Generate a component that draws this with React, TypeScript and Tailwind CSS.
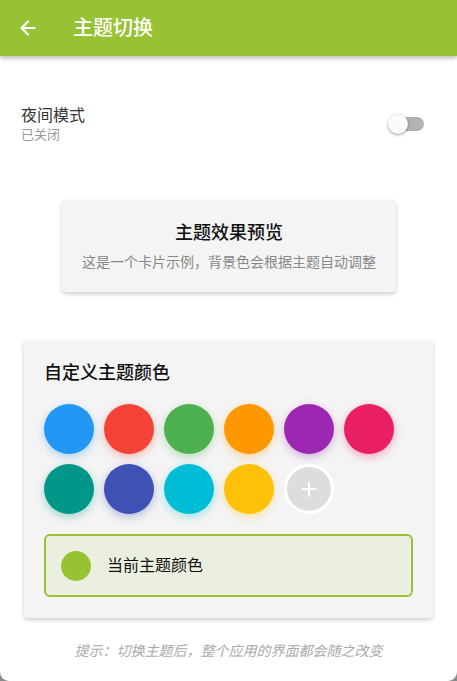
import { ArrowLeft, Plus } from 'lucide-react'

const COLORS = [
  { c: '#2196f3', glow: 'rgba(33,150,243,.35)' },
  { c: '#f44336', glow: 'rgba(244,67,54,.35)' },
  { c: '#4caf50', glow: 'rgba(76,175,80,.35)' },
  { c: '#ff9800', glow: 'rgba(255,152,0,.35)' },
  { c: '#9c27b0', glow: 'rgba(156,39,176,.35)' },
  { c: '#e91e63', glow: 'rgba(233,30,99,.35)' },
  { c: '#009688', glow: 'rgba(0,150,136,.35)' },
  { c: '#3f51b5', glow: 'rgba(63,81,181,.35)' },
  { c: '#00bcd4', glow: 'rgba(0,188,212,.35)' },
  { c: '#ffc107', glow: 'rgba(255,193,7,.35)' },
]

const FONT = '[font-family:Roboto,"Noto_Sans_CJK_SC",sans-serif]'

export default function App() {
  return (
    <div className={`w-[457px] h-[681px] bg-[#8a8a8a] ${FONT}`}>
      <div className="h-full bg-white rounded-b-[9px] overflow-hidden flex flex-col">
        {/* Header */}
        <div className="h-14 shrink-0 bg-[#97c234] flex items-center shadow-[0_2px_5px_rgba(0,0,0,.3)] relative z-10">
          <ArrowLeft className="w-[22px] h-[22px] text-white ml-[17px]" strokeWidth={2.4} />
          <h1 className="ml-[34px] text-[20px] font-medium text-white">主题切换</h1>
        </div>

        {/* Night mode */}
        <div className="shrink-0 flex items-center justify-between pl-[21px] pr-[33px] mt-[49px]">
          <div>
            <p className="text-[16px] leading-[21px] text-[#333]">夜间模式</p>
            <p className="text-[13px] leading-[17px] text-[#999]">已关闭</p>
          </div>
          <div className="relative w-[36px] h-[20px] flex items-center">
            <div className="absolute left-[8px] right-0 h-[14px] rounded-full bg-[#b3b3b3]" />
            <div className="absolute left-0 w-[20px] h-[20px] rounded-full bg-[#fafafa] shadow-[0_1px_3px_rgba(0,0,0,.4)]" />
          </div>
        </div>

        {/* Preview card */}
        <div className="shrink-0 mt-[57px] mx-[62px] w-[334px] h-[92px] bg-[#f4f4f4] rounded-[4px] shadow-[0_2px_4px_rgba(0,0,0,.2)] flex flex-col items-center justify-center">
          <p className="text-[18px] leading-[24px] font-medium text-[#111]">主题效果预览</p>
          <p className="mt-[8px] text-[14px] leading-[18px] text-[#888]">这是一个卡片示例，背景色会根据主题自动调整</p>
        </div>

        {/* Custom color card */}
        <div className="shrink-0 mt-[48px] mx-[24px] w-[409px] bg-[#f4f4f4] rounded-[4px] shadow-[0_2px_4px_rgba(0,0,0,.2)] px-[20px] pt-[21px] pb-[21px]">
          <p className="text-[18px] leading-[24px] font-medium text-[#111]">自定义主题颜色</p>
          <div className="mt-[19px] flex flex-wrap gap-[10px] w-[350px]">
            {COLORS.map(({ c, glow }) => (
              <div
                key={c}
                className="w-[50px] h-[50px] rounded-full"
                style={{ backgroundColor: c, boxShadow: `0 3px 8px ${glow}` }}
              />
            ))}
            <div className="w-[50px] h-[50px] rounded-full bg-[#dddddd] border-[3px] border-white flex items-center justify-center">
              <Plus className="w-[22px] h-[22px] text-white" strokeWidth={2.2} />
            </div>
          </div>
          <div className="mt-[20px] h-[63px] rounded-[6px] border-2 border-[#97c234] bg-[#ebefe0] flex items-center pl-[15px]">
            <div className="w-[30px] h-[30px] rounded-full bg-[#97c234]" />
            <p className="ml-[16px] text-[16px] text-[#111]">当前主题颜色</p>
          </div>
        </div>

        {/* Hint */}
        <p className="shrink-0 mt-[23px] text-center text-[14px] leading-[20px] italic text-[#aaa]">提示：切换主题后，整个应用的界面都会随之改变</p>
      </div>
    </div>
  )
}
